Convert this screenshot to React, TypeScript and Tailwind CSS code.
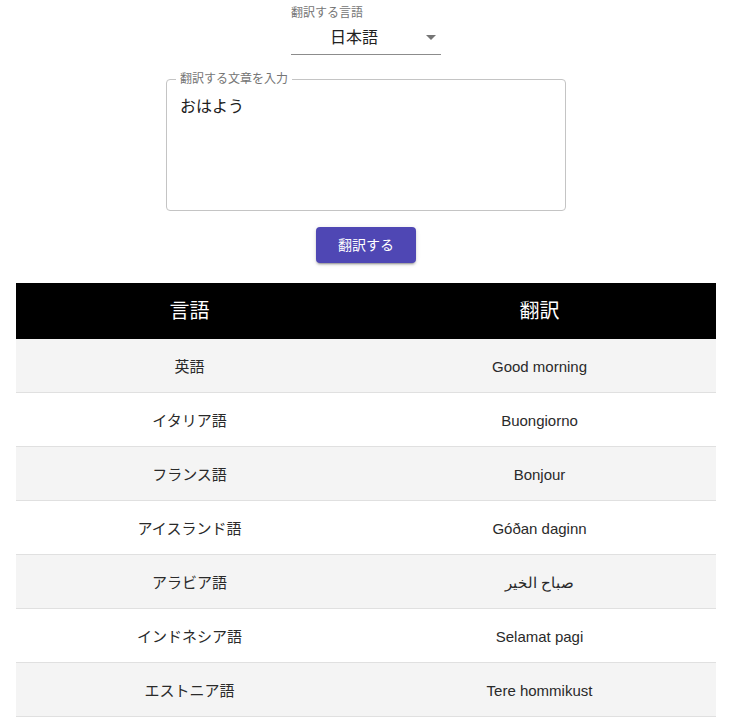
import React from 'react'

const rows = [
  { lang: '英語', text: 'Good morning' },
  { lang: 'イタリア語', text: 'Buongiorno' },
  { lang: 'フランス語', text: 'Bonjour' },
  { lang: 'アイスランド語', text: 'Góðan daginn' },
  { lang: 'アラビア語', text: 'صباح الخير' },
  { lang: 'インドネシア語', text: 'Selamat pagi' },
  { lang: 'エストニア語', text: 'Tere hommikust' },
]

export default function App() {
  return (
    <div className="min-h-[727px] bg-white px-4 font-['Liberation_Sans','Noto_Sans_CJK_JP',sans-serif] text-[#212121]">
      {/* 言語選択 */}
      <div className="flex flex-col items-center pt-[5px]">
        <div className="w-[150px]">
          <p className="h-4 text-xs leading-4 text-[#757575]">翻訳する言語</p>
          <div className="relative flex h-[34px] items-center justify-center border-b border-[#8c8c8c] pr-6">
            <span className="text-base">日本語</span>
            <svg className="absolute right-[5px] top-[14px]" width="10" height="5" viewBox="0 0 10 5">
              <path d="M0 0 L10 0 L5 5 Z" fill="#757575" />
            </svg>
          </div>
        </div>

        {/* 入力欄 */}
        <fieldset className="mt-[18px] h-[138px] w-[400px] rounded border border-[#c4c4c4] px-[13px] pt-1">
          <legend className="-ml-1 px-1 text-xs leading-3 text-[#757575]">翻訳する文章を入力</legend>
          <p className="mt-[6px] text-base leading-6">おはよう</p>
        </fieldset>

        <button className="mt-4 h-9 w-[100px] rounded bg-[#4f47b4] text-sm text-white shadow-[0_3px_1px_-2px_rgba(0,0,0,0.2),0_2px_2px_0_rgba(0,0,0,0.14),0_1px_5px_0_rgba(0,0,0,0.12)]">
          翻訳する
        </button>
      </div>

      {/* 結果テーブル */}
      <div className="mt-5 w-[700px]">
        <div className="grid h-14 grid-cols-[347px_353px] items-center bg-black text-xl text-white">
          <div className="text-center">言語</div>
          <div className="text-center">翻訳</div>
        </div>
        {rows.map((r, i) => (
          <div
            key={r.lang}
            className={`grid h-[54px] grid-cols-[347px_353px] items-center border-b border-[#e0e0e0] pt-[3px] text-[15px] text-[#2a2a2a] ${i % 2 === 0 ? 'bg-[#f4f4f4]' : 'bg-white'}`}
          >
            <div className="text-center">{r.lang}</div>
            <div className="text-center">{r.text}</div>
          </div>
        ))}
      </div>
    </div>
  )
}
